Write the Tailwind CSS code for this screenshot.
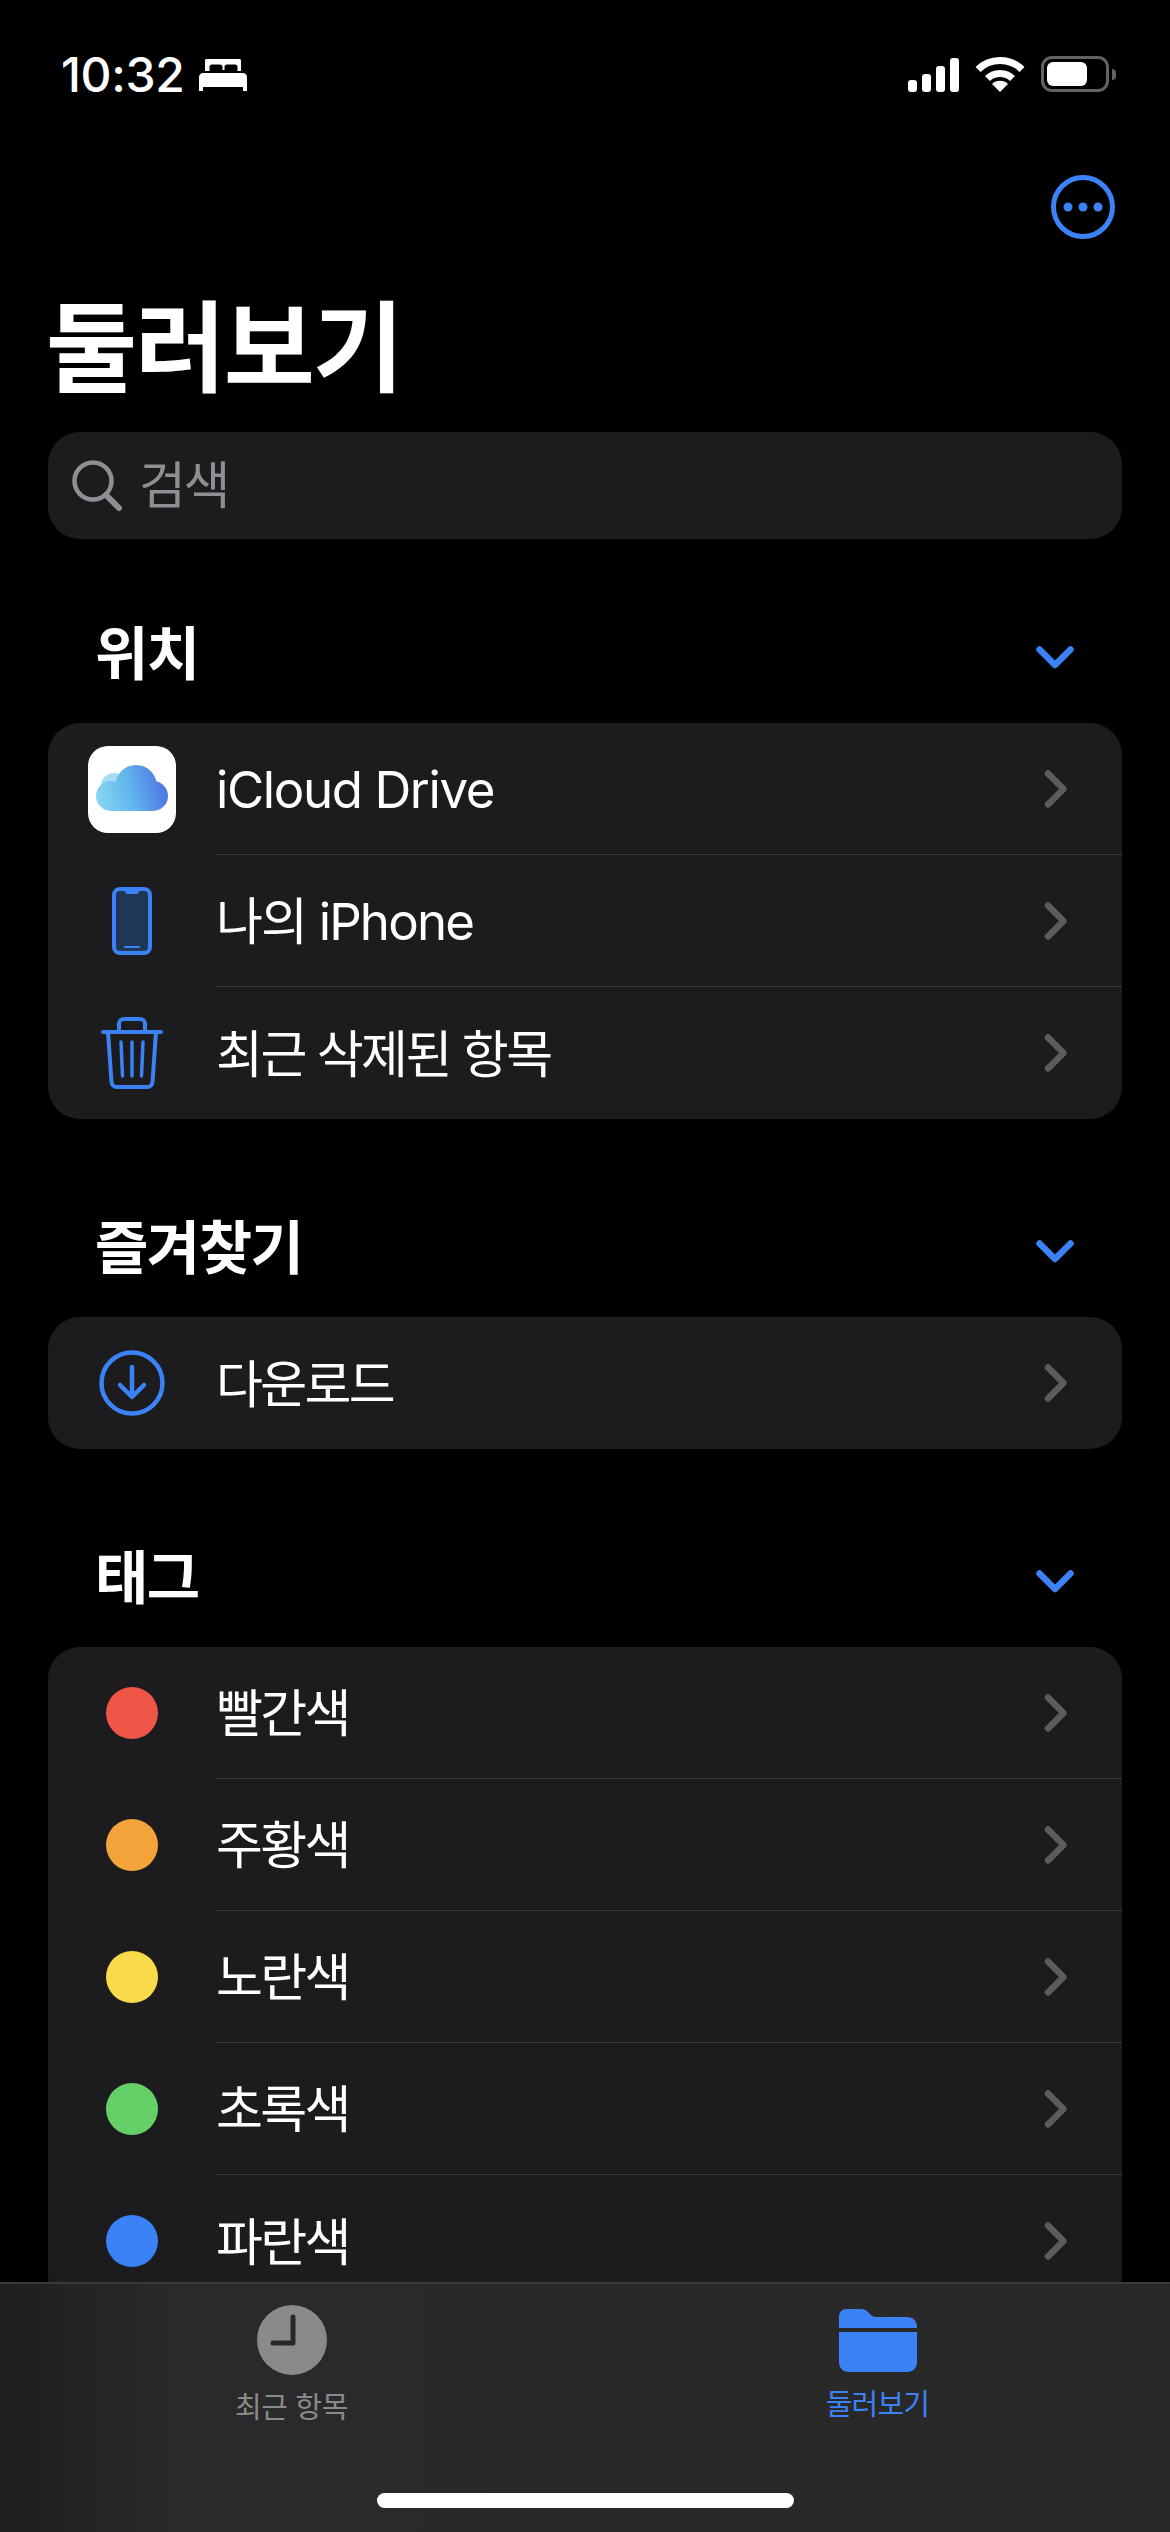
<!doctype html>
<html lang="ko">
<head>
<meta charset="utf-8">
<script src="https://cdn.jsdelivr.net/npm/@tailwindcss/browser@4"></script>
</head>
<body class="bg-black">
<div class="relative w-[1170px] h-[2532px] overflow-hidden bg-black text-white font-['Inter','Noto_Sans_CJK_KR',sans-serif]">

  <!-- status bar -->
  <div class="flex h-[182px] items-start justify-between pt-[55px] pl-[61px] pr-[54px]">
    <div class="flex items-center gap-[14px]">
      <span class="text-[48px] leading-[40px] font-medium tracking-[-0.3px]">10:32</span>
      <svg class="w-[48px] h-[32px]" viewBox="0 0 48 32" fill="#fff"><path d="M6 1.500C6 .7 6.700 0 7.500 0h33c.8 0 1.500.7 1.500 1.500V12h-3.500V8c0-1.500-1-2.500-2.500-2.500h-8c-1.500 0-2.500 1-2.500 2.500v3h-2V8c0-1.500-1-2.500-2.500-2.500h-8c-1.500 0-2.500 1-2.500 2.500v4H6zM4 14h40c2.200 0 4 1.800 4 4v14h-4v-4H4v4H0V18c0-2.200 1.800-4 4-4z"/></svg>
    </div>
    <div class="flex items-end gap-[16px] pt-[1px]">
      <div class="flex items-end gap-[5px] h-[34px]">
        <div class="w-[9px] h-[12px] rounded-[3px] bg-white"></div>
        <div class="w-[9px] h-[18px] rounded-[3px] bg-white"></div>
        <div class="w-[9px] h-[26px] rounded-[3px] bg-white"></div>
        <div class="w-[9px] h-[34px] rounded-[3px] bg-white"></div>
      </div>
      <svg class="w-[50px] h-[36px]" viewBox="0 0 50 36" fill="none">
        <path d="M3 13.500C8.500 8 16 4.500 25 4.500S41.500 8 47 13.500" stroke="#fff" stroke-width="7"/>
        <path d="M12.500 22.500C15.500 19.500 20 17.500 25 17.500s9.500 2 12.500 5" stroke="#fff" stroke-width="7"/>
        <path d="M17 28c2-2 5-3.200 8-3.200s6 1.200 8 3.200l-8 8z" fill="#fff"/>
      </svg>
      <div class="flex items-center gap-[3px]">
        <div class="w-[68px] h-[36px] rounded-[11px] border-[3px] border-[#636366] p-[3px]">
          <div class="w-[40px] h-full rounded-[6px] bg-white"></div>
        </div>
        <div class="w-[4px] h-[11px] rounded-r-[4px] bg-[#636366]"></div>
      </div>
    </div>
  </div>

  <!-- more button -->
  <div class="flex justify-end pr-[55px] h-[64px] mt-[-7px]">
    <svg class="w-[64px] h-[64px]" viewBox="0 0 64 64" fill="#3b82f6">
      <circle cx="32" cy="32" r="29.500" fill="none" stroke="#3b82f6" stroke-width="5"/>
      <circle cx="17" cy="32" r="4.500"/><circle cx="32" cy="32" r="4.500"/><circle cx="47" cy="32" r="4.500"/>
    </svg>
  </div>

  <!-- title -->
  <h1 class="mt-[49px] pl-[46px] text-[99px] leading-[120px] font-bold tracking-[-2.2px]">둘러보기</h1>

  <!-- search -->
  <div class="mx-[48px] mt-[24px] h-[107px] rounded-[32px] bg-[#1c1c1e] flex items-center pl-[24px] gap-[17px]">
    <svg class="w-[50px] h-[52px]" viewBox="0 0 50 52" fill="none" stroke="#8e8e93"><circle cx="21" cy="21" r="18.500" stroke-width="4.500"/><path d="M34 35l13 13" stroke-width="6" stroke-linecap="round"/></svg>
    <span class="text-[51px] leading-[60px] text-[#8e8e93] tracking-[-2.500px]">검색</span>
  </div>

  <!-- 위치 -->
  <div class="mt-[42px] mx-[48px] h-[142px] flex items-center justify-between pl-[47px] pr-[48px]">
    <h2 class="text-[58px] leading-[70px] font-bold tracking-[-1.500px] pt-[3px]">위치</h2>
    <svg class="w-[38px] h-[24px] mt-[12px]" viewBox="0 0 38 24" fill="none" stroke="#3b82f6" stroke-width="6.500" stroke-linecap="round" stroke-linejoin="round"><path d="M3.500 3.500L19 19 34.500 3.500"/></svg>
  </div>
  <div class="mx-[48px] rounded-[32px] bg-[#1c1c1e] overflow-hidden">
    <div class="flex h-[132px]">
      <div class="w-[168px] shrink-0 flex items-center justify-center">
        <svg class="w-[88px] h-[87px]" viewBox="0 0 88 87">
          <defs><linearGradient id="cl" gradientUnits="userSpaceOnUse" x1="8" y1="55" x2="80" y2="35"><stop offset="0" stop-color="#8ad8f2"/><stop offset="0.45" stop-color="#62b8ee"/><stop offset="1" stop-color="#4a70e2"/></linearGradient></defs>
          <rect width="88" height="87" rx="20" fill="#fff"/>
          <circle cx="26" cy="40" r="13" fill="#a4dcf3"/>
          <g fill="url(#cl)"><circle cx="48" cy="40" r="21"/><circle cx="23" cy="50" r="15"/><circle cx="65" cy="50" r="15"/><rect x="23" y="45" width="42" height="20"/></g>
        </svg>
      </div>
      <div class="flex-1 border-b-[1.500px] border-[#38383a] flex items-center justify-between pr-[54px]">
        <span class="text-[51px] leading-[60px] tracking-[-1.400px] pt-[3px]">iCloud Drive</span>
        <svg class="w-[24px] h-[38px]" viewBox="0 0 24 38" fill="none" stroke="#5c5c5e" stroke-width="6.500" stroke-linecap="round" stroke-linejoin="round"><path d="M4 3.500L19.500 19 4 34.500"/></svg>
      </div>
    </div>
    <div class="flex h-[132px]">
      <div class="w-[168px] shrink-0 flex items-center justify-center">
        <svg class="w-[40px] h-[68px]" viewBox="0 0 40 68"><rect x="2" y="2" width="36" height="64" rx="6" fill="#1f3655" stroke="#3b82f6" stroke-width="4"/><path d="M13 2h14v2.500c0 1.500-1 2.500-2.500 2.500h-9c-1.500 0-2.500-1-2.500-2.500z" fill="#3b82f6"/><rect x="12" y="59" width="16" height="2" rx="1" fill="#3b82f6"/></svg>
      </div>
      <div class="flex-1 border-b-[1.500px] border-[#38383a] flex items-center justify-between pr-[54px]">
        <span class="text-[51px] leading-[60px] tracking-[-1.850px] pt-[3px]">나의 iPhone</span>
        <svg class="w-[24px] h-[38px]" viewBox="0 0 24 38" fill="none" stroke="#5c5c5e" stroke-width="6.500" stroke-linecap="round" stroke-linejoin="round"><path d="M4 3.500L19.500 19 4 34.500"/></svg>
      </div>
    </div>
    <div class="flex h-[132px]">
      <div class="w-[168px] shrink-0 flex items-center justify-center">
        <svg class="w-[62px] h-[72px]" viewBox="0 0 62 72" fill="none" stroke="#3b82f6" stroke-linecap="round"><path d="M2 15h58" stroke-width="4"/><path d="M18 14V7c0-3 2-5 5-5h16c3 0 5 2 5 5v7" stroke-width="4"/><path d="M7 15l3.500 50c.2 3 2.500 5 5 5h31c2.500 0 4.800-2 5-5L55 15" stroke-width="4"/><path d="M20 25l1.500 34M31 25v34M42 25l-1.500 34" stroke-width="3.500"/></svg>
      </div>
      <div class="flex-1 flex items-center justify-between pr-[54px]">
        <span class="text-[51px] leading-[60px] tracking-[-2.500px] pt-[3px]">최근 삭제된 항목</span>
        <svg class="w-[24px] h-[38px]" viewBox="0 0 24 38" fill="none" stroke="#5c5c5e" stroke-width="6.500" stroke-linecap="round" stroke-linejoin="round"><path d="M4 3.500L19.500 19 4 34.500"/></svg>
      </div>
    </div>
  </div>

  <!-- 즐겨찾기 -->
  <div class="mt-[56px] mx-[48px] h-[142px] flex items-center justify-between pl-[47px] pr-[48px]">
    <h2 class="text-[58px] leading-[70px] font-bold tracking-[-1.500px] pt-[3px]">즐겨찾기</h2>
    <svg class="w-[38px] h-[24px] mt-[12px]" viewBox="0 0 38 24" fill="none" stroke="#3b82f6" stroke-width="6.500" stroke-linecap="round" stroke-linejoin="round"><path d="M3.500 3.500L19 19 34.500 3.500"/></svg>
  </div>
  <div class="mx-[48px] rounded-[32px] bg-[#1c1c1e] overflow-hidden">
    <div class="flex h-[132px]">
      <div class="w-[168px] shrink-0 flex items-center justify-center">
        <svg class="w-[66px] h-[66px]" viewBox="0 0 66 66" fill="none" stroke="#3b82f6" stroke-linecap="round" stroke-linejoin="round"><circle cx="33" cy="33" r="30.500" stroke-width="4.500"/><path d="M33 17v29M21 35l12 12 12-12" stroke-width="4.500"/></svg>
      </div>
      <div class="flex-1 flex items-center justify-between pr-[54px]">
        <span class="text-[51px] leading-[60px] tracking-[-2.700px] pt-[3px]">다운로드</span>
        <svg class="w-[24px] h-[38px]" viewBox="0 0 24 38" fill="none" stroke="#5c5c5e" stroke-width="6.500" stroke-linecap="round" stroke-linejoin="round"><path d="M4 3.500L19.500 19 4 34.500"/></svg>
      </div>
    </div>
  </div>

  <!-- 태그 -->
  <div class="mt-[56px] mx-[48px] h-[142px] flex items-center justify-between pl-[47px] pr-[48px]">
    <h2 class="text-[58px] leading-[70px] font-bold tracking-[-1.500px] pt-[3px]">태그</h2>
    <svg class="w-[38px] h-[24px] mt-[12px]" viewBox="0 0 38 24" fill="none" stroke="#3b82f6" stroke-width="6.500" stroke-linecap="round" stroke-linejoin="round"><path d="M3.500 3.500L19 19 34.500 3.500"/></svg>
  </div>
  <div class="mx-[48px] rounded-[32px] bg-[#1c1c1e] overflow-hidden">
    <div class="flex h-[132px]">
      <div class="w-[168px] shrink-0 flex items-center justify-center"><div class="w-[52px] h-[52px] rounded-full bg-[#ef5648]"></div></div>
      <div class="flex-1 border-b-[1.500px] border-[#38383a] flex items-center justify-between pr-[54px]">
        <span class="text-[51px] leading-[60px] tracking-[-2.700px] pt-[3px]">빨간색</span>
        <svg class="w-[24px] h-[38px]" viewBox="0 0 24 38" fill="none" stroke="#5c5c5e" stroke-width="6.500" stroke-linecap="round" stroke-linejoin="round"><path d="M4 3.500L19.500 19 4 34.500"/></svg>
      </div>
    </div>
    <div class="flex h-[132px]">
      <div class="w-[168px] shrink-0 flex items-center justify-center"><div class="w-[52px] h-[52px] rounded-full bg-[#f2a33a]"></div></div>
      <div class="flex-1 border-b-[1.500px] border-[#38383a] flex items-center justify-between pr-[54px]">
        <span class="text-[51px] leading-[60px] tracking-[-2.700px] pt-[3px]">주황색</span>
        <svg class="w-[24px] h-[38px]" viewBox="0 0 24 38" fill="none" stroke="#5c5c5e" stroke-width="6.500" stroke-linecap="round" stroke-linejoin="round"><path d="M4 3.500L19.500 19 4 34.500"/></svg>
      </div>
    </div>
    <div class="flex h-[132px]">
      <div class="w-[168px] shrink-0 flex items-center justify-center"><div class="w-[52px] h-[52px] rounded-full bg-[#f9da4a]"></div></div>
      <div class="flex-1 border-b-[1.500px] border-[#38383a] flex items-center justify-between pr-[54px]">
        <span class="text-[51px] leading-[60px] tracking-[-2.700px] pt-[3px]">노란색</span>
        <svg class="w-[24px] h-[38px]" viewBox="0 0 24 38" fill="none" stroke="#5c5c5e" stroke-width="6.500" stroke-linecap="round" stroke-linejoin="round"><path d="M4 3.500L19.500 19 4 34.500"/></svg>
      </div>
    </div>
    <div class="flex h-[132px]">
      <div class="w-[168px] shrink-0 flex items-center justify-center"><div class="w-[52px] h-[52px] rounded-full bg-[#65d068]"></div></div>
      <div class="flex-1 border-b-[1.500px] border-[#38383a] flex items-center justify-between pr-[54px]">
        <span class="text-[51px] leading-[60px] tracking-[-2.700px] pt-[3px]">초록색</span>
        <svg class="w-[24px] h-[38px]" viewBox="0 0 24 38" fill="none" stroke="#5c5c5e" stroke-width="6.500" stroke-linecap="round" stroke-linejoin="round"><path d="M4 3.500L19.500 19 4 34.500"/></svg>
      </div>
    </div>
    <div class="flex h-[132px]">
      <div class="w-[168px] shrink-0 flex items-center justify-center"><div class="w-[52px] h-[52px] rounded-full bg-[#3b82f6]"></div></div>
      <div class="flex-1 flex items-center justify-between pr-[54px]">
        <span class="text-[51px] leading-[60px] tracking-[-2.700px] pt-[3px]">파란색</span>
        <svg class="w-[24px] h-[38px]" viewBox="0 0 24 38" fill="none" stroke="#5c5c5e" stroke-width="6.500" stroke-linecap="round" stroke-linejoin="round"><path d="M4 3.500L19.500 19 4 34.500"/></svg>
      </div>
    </div>
  </div>

  <!-- tab bar -->
  <div class="absolute left-0 bottom-0 w-full h-[250px] border-t-[2px] border-[#3a3a3c] bg-gradient-to-r from-[#1e1e1f] via-[#2a2a2c] via-[15%] to-[#282828] flex">
    <div class="w-1/2 flex flex-col items-center pt-[21px] pr-[2px]">
      <svg class="w-[70px] h-[70px]" viewBox="0 0 70 70"><circle cx="35" cy="35" r="35" fill="#8a8a8a"/><path d="M36 12v26H16" fill="none" stroke="#282828" stroke-width="5" stroke-linecap="round" stroke-linejoin="round"/></svg>
      <span class="mt-[15px] text-[29px] leading-[36px] text-[#8a8a8a] tracking-[-0.4px]">최근 항목</span>
    </div>
    <div class="w-1/2 flex flex-col items-center pt-[25px]">
      <svg class="w-[78px] h-[63px]" viewBox="0 0 78 63" fill="#3b82f6"><path d="M0 19V8c0-4.500 3-8 8-8h14c3 0 5 1 7 3l3 3c1.500 1.500 3 2 5 2h31c6 0 10 4 10 10v1z"/><path d="M0 23h78v30c0 6-4 10-10 10H10C4 63 0 59 0 53z"/></svg>
      <span class="mt-[15px] text-[29px] leading-[36px] text-[#3b82f6] tracking-[-0.8px]">둘러보기</span>
    </div>
  </div>
  <div class="absolute left-[377px] top-[2493px] w-[417px] h-[15px] rounded-full bg-white"></div>
</div>
</body>
</html>
